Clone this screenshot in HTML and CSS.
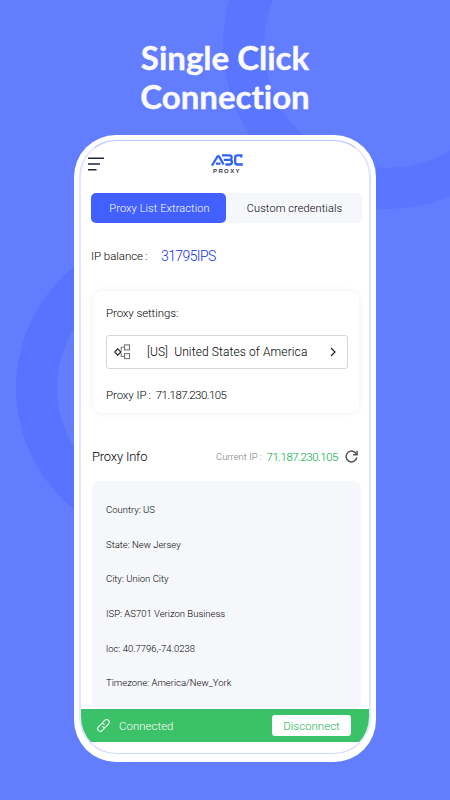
FILE: index.html
```html
<!DOCTYPE html>
<html lang="en">
<head>
  <meta charset="UTF-8">
  <meta name="viewport" content="width=device-width, initial-scale=1.0">
  <title>ABC Proxy</title>
  <link rel="stylesheet" href="styles.css">
</head>
<body>
  <div class="promo">
    <div class="ring ring-top"></div>
    <div class="ring ring-left"></div>

    <h1 class="title">Single Click<br>Connection</h1>

    <div class="phone">
      <div class="screen">
        <!-- Top bar -->
        <header class="topbar">
          <svg class="menu" width="16" height="14" viewBox="0 0 16 14" stroke="#25253f" stroke-width="1.5">
            <path d="M0 1.2H16M0 7.1H12M0 12.8H8.5"/>
          </svg>
          <div class="logo">
            <svg width="32" height="12" viewBox="0 0 32 12" fill="none" stroke="#2f62f5" stroke-width="2.3">
              <path d="M1 11.5L6.2 3Q7.3 1.2 8.4 3L12.6 10.5M5 9.6H9.5"/>
              <path d="M11 1.4H18.5Q20.6 1.4 20.6 3.4Q20.6 5.9 18.8 5.9Q20.9 5.9 20.9 8.1Q20.9 10.5 18.7 10.5H14.4M12.8 5.9H19"/>
              <path d="M30.3 3.4V1.4H26.3Q24.2 1.4 24.2 3.5V8.3Q24.2 10.5 26.3 10.5H31.8"/>
            </svg>
            <span class="logo-text">PROXY</span>
          </div>
        </header>

        <!-- Tabs -->
        <div class="tabs">
          <div class="tab active">Proxy List Extraction</div>
          <div class="tab">Custom credentials</div>
        </div>

        <div class="balance">
          <span class="balance-label">IP balance<i class="colon">:</i></span>
          <span class="balance-value">31795IPS</span>
        </div>

        <!-- Proxy settings -->
        <section class="card">
          <p class="card-title">Proxy settings:</p>
          <div class="select">
            <svg width="17" height="16" viewBox="0 0 17 16" fill="none" stroke="#777" stroke-width="1.1">
              <path d="M3.7 4.8L7 8L3.7 11.2L.7 8Z" stroke="#222"/>
              <path d="M10 3.3H7.3V6.8M7.3 9.2V12.5H10"/>
              <rect x="10.5" y=".9" width="5" height="5"/>
              <rect x="10.5" y="9.6" width="5" height="5"/>
            </svg>
            <span class="country">[US]&nbsp; United States of America</span>
            <svg width="6" height="10" viewBox="0 0 6 10" fill="none" stroke="#222" stroke-width="1.2">
              <path d="M1 1L5 5L1 9"/>
            </svg>
          </div>
          <p class="proxy-ip"><span>Proxy IP<i class="colon">:</i></span><span class="ip">71.187.230.105</span></p>
        </section>

        <!-- Proxy info -->
        <div class="info-head">
          <h2>Proxy Info</h2>
          <span class="current-label">Current IP<i class="colon">:</i></span>
          <span class="current-ip">71.187.230.105</span>
          <svg width="13" height="13" viewBox="0 0 13 13" fill="none" stroke="#555" stroke-width="1.5">
            <path d="M11.5 4.5A5.4 5.4 0 1 0 11.8 7.5"/>
            <path d="M12.1 .7V4.8H8"/>
          </svg>
        </div>
        <ul class="info">
          <li>Country: US</li>
          <li>State: New Jersey</li>
          <li>City: Union City</li>
          <li>ISP: AS701 Verizon Business</li>
          <li>loc: 40.7796,-74.0238</li>
          <li>Timezone: America/New_York</li>
        </ul>

        <!-- Status bar -->
        <footer class="status">
          <svg width="13" height="13" viewBox="0 0 14 14" fill="none" stroke="#fff" stroke-width="1.1" stroke-linecap="round">
            <path d="M6.1 3.7L8.3 1.5A2.8 2.8 0 0 1 12.4 5.5L9.8 8.1A2.7 2.7 0 0 1 6.1 8.2"/>
            <path d="M7.9 10.1L5.6 12.4A2.8 2.8 0 0 1 1.6 8.4L4.2 5.8A2.7 2.7 0 0 1 7.9 5.7"/>
          </svg>
          <span class="status-text">Connected</span>
          <button class="disconnect">Disconnect</button>
        </footer>
      </div>
    </div>
  </div>
</body>
</html>
```

FILE: styles.css
```css
* { box-sizing: border-box; }

body {
  margin: 0;
  font-family: Roboto, "Liberation Sans", sans-serif;
  font-weight: 300;
  color: #000;
}

h1, h2, p, ul { margin: 0; padding: 0; }
span { white-space: nowrap; }

.promo {
  position: relative;
  width: 450px;
  height: 800px;
  overflow: hidden;
  background: #627eff;
}

/* Background rings */
.ring {
  position: absolute;
  border: 41px solid #5773ff;
  border-radius: 50%;
}
.ring-top { left: 223px; top: -119px; width: 328px; height: 328px; border-color: #5a76fe; }
.ring-left { left: 16px; top: 232px; width: 312px; height: 312px; }

.title {
  position: relative;
  height: 135px;
  padding-top: 38px;
  text-align: center;
  font-family: Lato, sans-serif;
  font-size: 33px;
  line-height: 39px;
  font-weight: 700;
  font-variant-ligatures: none;
  -webkit-text-stroke: .4px #fafaff;
  color: #fafaff;
}

.phone {
  position: relative;
  width: 302px;
  height: 627px;
  margin-left: 74px;
  padding: 5px 5px 8px;
  background: #fff;
  border-radius: 42px;
}

.screen {
  display: flex;
  flex-direction: column;
  height: 614px;
  border: solid #dfe4ff;
  border-width: 1px 2px;
  border-top-color: #b9c4ff;
  border-bottom-color: #d3daff;
  border-radius: 37px;
  overflow: hidden;
}

.topbar {
  display: flex;
  flex: none;
  height: 52px;
  padding: 13px 0 0 7px;
}
.menu { margin-top: 3px; }
.logo {
  display: flex;
  flex-direction: column;
  align-items: center;
  margin-left: 107px;
}
.logo-text {
  font-family: "Liberation Sans", sans-serif;
  font-size: 6px;
  line-height: 8px;
  margin-top: 1px;
  font-weight: 700;
  letter-spacing: 1.4px;
  color: #353849;
}

.tabs {
  display: flex;
  flex: none;
  width: 271px;
  height: 30px;
  margin-left: 10px;
  background: #f6f7fa;
  border-radius: 5px;
}
.tab {
  width: 135px;
  padding-left: 2px;
  line-height: 31px;
  text-align: center;
  font-size: 11px;
  letter-spacing: .1px;
}
.tab.active {
  background: #4160ff;
  border-radius: 5px;
  color: #fff;
}

.colon { font-style: normal; padding-left: 2px; }

.balance {
  display: flex;
  flex: none;
  align-items: center;
  height: 68px;
  padding: 0 0 3px 10px;
}
.balance-label { width: 70px; font-size: 11.5px; letter-spacing: -.05px; }
.balance-value { font-size: 14px; letter-spacing: -.6px; color: #0f30e6; }

.card {
  flex: none;
  width: 266px;
  height: 122px;
  margin-left: 12px;
  padding: 14px 13px 0;
  border-radius: 9px;
  box-shadow: 0 0 7px rgba(0, 0, 0, .07);
  font-size: 11.5px;
}
.card-title { line-height: 16px; letter-spacing: -.1px; }
.select {
  display: flex;
  align-items: center;
  width: 242px;
  height: 34px;
  margin-top: 14px;
  padding: 0 11px 0 7px;
  border: 1px solid #d5d5d5;
  border-radius: 3px;
}
.country { flex: 1; margin-left: 16px; font-size: 12px; letter-spacing: .11px; }
.proxy-ip { display: flex; margin-top: 18px; line-height: 16px; letter-spacing: -.1px; }
.ip { margin-left: 5px; letter-spacing: -.55px; }

.info-head {
  display: flex;
  flex: none;
  align-items: center;
  height: 68px;
  padding: 19px 11px 0 11px;
}
.info-head h2 { flex: 1; font-size: 13px; font-weight: 300; letter-spacing: -.2px; }
.current-label { font-size: 9.5px; color: #777; }
.current-ip { margin: 0 7px 0 5px; font-size: 11.5px; letter-spacing: -.5px; color: #00a83e; }

.info {
  flex: none;
  width: 269px;
  height: 228px;
  margin-left: 11px;
  padding: 11px 14px 0;
  background: #f6f7fa;
  border-radius: 8px;
  list-style: none;
  font-size: 9.5px;
}
.info li { height: 34.7px; line-height: 35px; }

.status {
  display: flex;
  flex: none;
  align-items: center;
  height: 33px;
  padding: 0 18px 0 16px;
  background: #3bc168;
  color: #fff;
}
.status-text { flex: 1; margin-left: 9px; font-size: 11.5px; }
.disconnect {
  width: 79px;
  height: 21px;
  padding: 0;
  border: 0;
  border-radius: 3px;
  background: #fff;
  color: #20b556;
  font: inherit;
  font-size: 11.5px;
}
```
